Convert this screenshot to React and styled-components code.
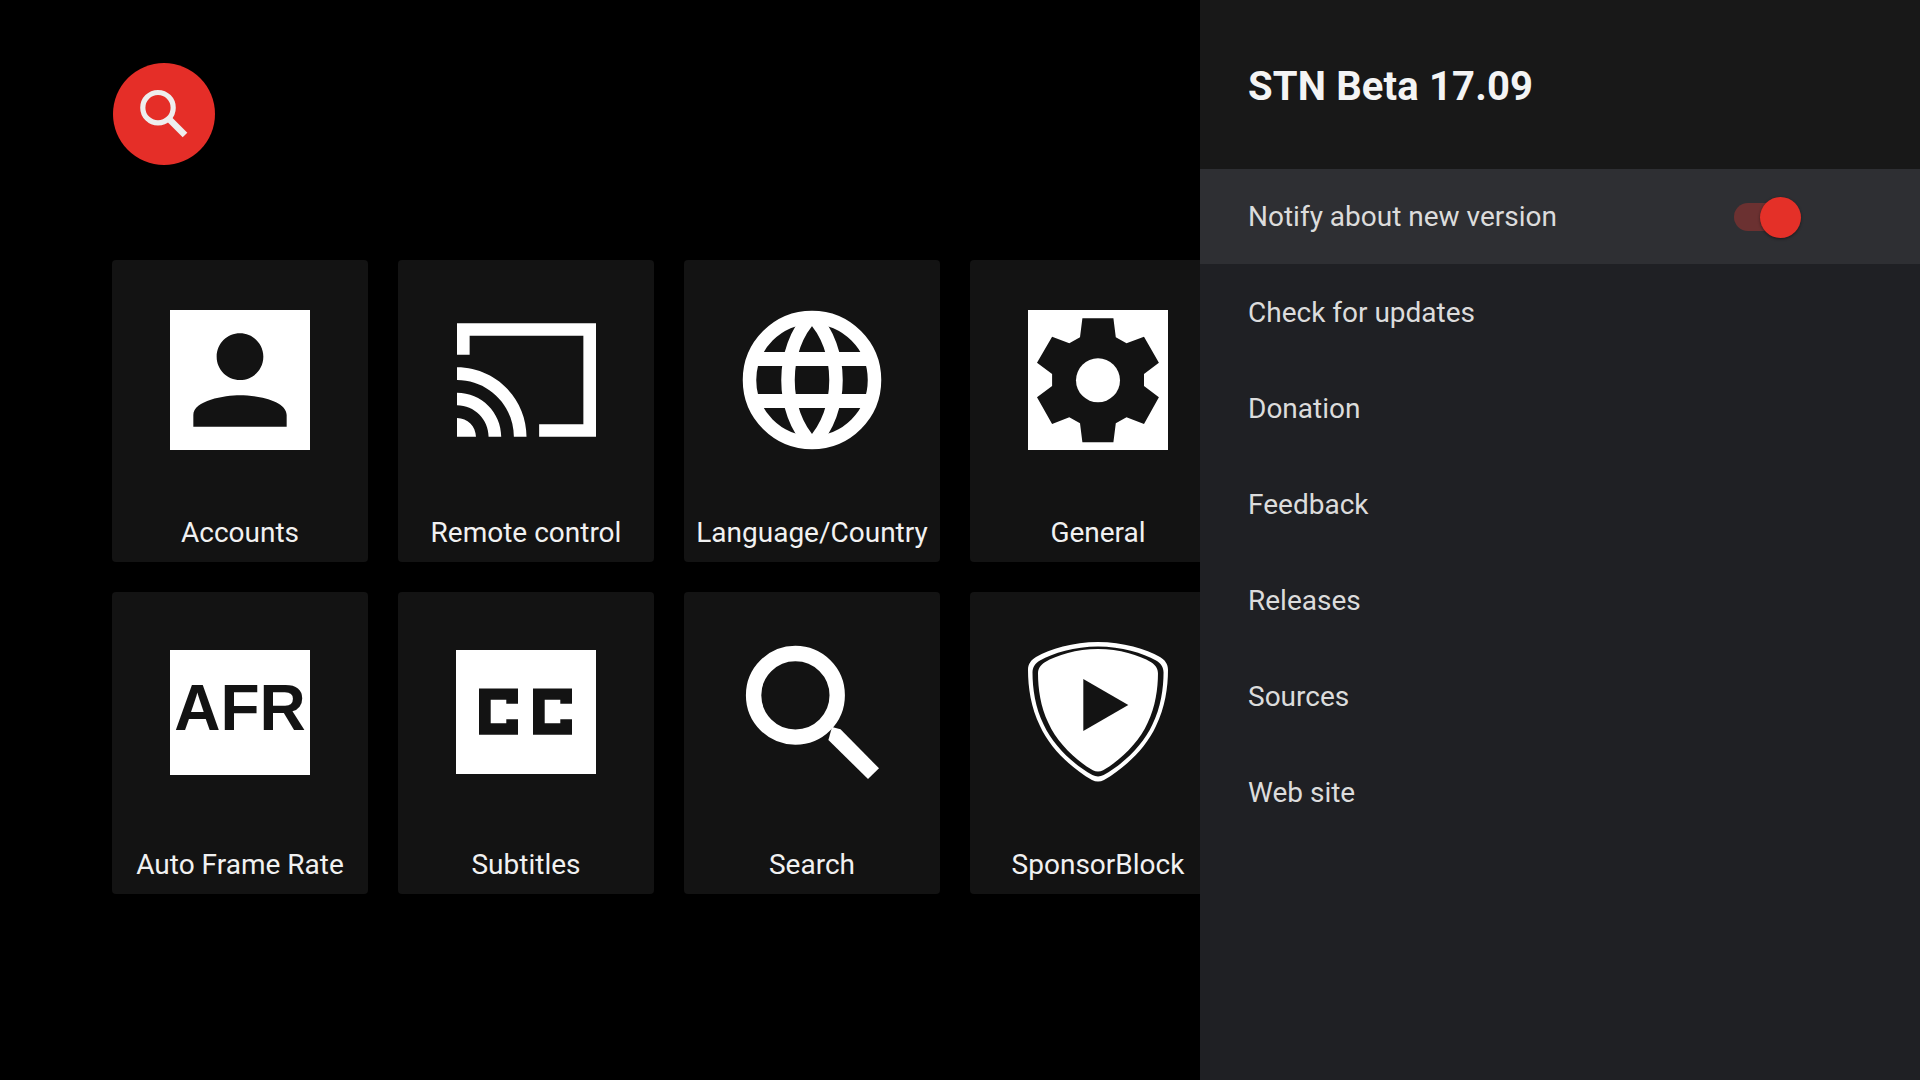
import styled, { createGlobalStyle } from 'styled-components';

const GlobalStyle = createGlobalStyle`
  html, body {
    margin: 0;
    padding: 0;
    background: #000;
  }
  body {
    font-family: Roboto, "Noto Sans", sans-serif;
    overflow: hidden;
  }
`;

const Screen = styled.div`
  display: flex;
  width: 1920px;
  height: 1080px;
  background: #000;
`;

const Browse = styled.main`
  width: 1200px;
  flex: none;
  overflow: hidden;
  padding: 63px 0 0 112px;
  box-sizing: border-box;
`;

const SearchOrb = styled.div`
  width: 102px;
  height: 102px;
  margin-left: 1px;
  border-radius: 50%;
  background: #e52e28;
  display: flex;
  align-items: center;
  justify-content: center;

  svg {
    display: block;
  }
`;

const Grid = styled.div`
  display: grid;
  grid-template-columns: repeat(4, 256px);
  grid-auto-rows: 302px;
  gap: 30px;
  margin-top: 95px;
`;

const Card = styled.div`
  background: #131313;
  border-radius: 4px;
  display: flex;
  flex-direction: column;
  align-items: center;
`;

const IconSlot = styled.div`
  height: 140px;
  margin-top: 50px;
  display: flex;
  align-items: center;
  justify-content: center;

  svg {
    display: block;
  }
`;

const CardLabel = styled.div`
  margin-top: 63px;
  font-size: 28px;
  line-height: 40px;
  color: #f1f1f1;
  white-space: nowrap;
`;

const AfrBadge = styled.div`
  width: 140px;
  height: 125px;
  background: #fff;
  color: #131313;
  font-family: "Liberation Sans", Arial, sans-serif;
  font-weight: 700;
  font-size: 64px;
  line-height: 116px;
  text-align: center;
`;

const Panel = styled.aside`
  width: 720px;
  flex: none;
  background: #1f2024;
`;

const PanelHeader = styled.header`
  height: 169px;
  background: #181818;
  padding: 64px 48px 0;
  box-sizing: border-box;
`;

const PanelTitle = styled.h1`
  margin: 0;
  font-size: 40px;
  line-height: 46px;
  font-weight: 700;
  letter-spacing: 0.15px;
  color: #f4f4f4;
`;

const Row = styled.div`
  height: ${(p) => (p.$focused ? '95px' : '96px')};
  padding: 0 48px;
  display: flex;
  align-items: center;
  font-size: 28px;
  color: #dcdcdc;
  background: ${(p) => (p.$focused ? '#2e2f33' : 'transparent')};
`;

const RowText = styled.span`
  flex: 1;
`;

const Switch = styled.div`
  position: relative;
  width: 56px;
  height: 28px;
  margin-right: 82px;
  border-radius: 14px;
  background: #6b3131;
`;

const SwitchThumb = styled.div`
  position: absolute;
  top: -6px;
  left: 26px;
  width: 41px;
  height: 41px;
  border-radius: 50%;
  background: #e43028;
  box-shadow: 0 1px 3px rgba(0, 0, 0, 0.45);
`;

const CARD = '#131313';

const SHIELD =
  'M70 0C95 0 118 7 132 15C137 18 140 22 140 28C140 45 137 66 128 84C118 106 97 126 76 138C72 140 68 140 64 138C43 126 22 106 12 84C3 66 0 45 0 28C0 22 3 18 8 15C22 7 45 0 70 0Z';

const AccountIcon = () => (
  <svg width="140" height="140" viewBox="0 0 24 24">
    <path
      fill="#fff"
      fillRule="evenodd"
      d="M0 0h24v24H0zM12 12c2.21 0 4-1.79 4-4s-1.79-4-4-4-4 1.79-4 4 1.79 4 4 4zm0 2.6c-2.67 0-8 .9-8 3.4v2h16v-2c0-2.5-5.33-3.4-8-3.4z"
    />
  </svg>
);

const CastIcon = () => (
  <svg width="139" height="114" viewBox="1 3 22 18">
    <path
      fill="#fff"
      d="M23 3H1v5h2V5h18v14h-7v2h9V3zM1 18v3h3c0-1.66-1.34-3-3-3zm0-4v2c2.76 0 5 2.24 5 5h2c0-3.87-3.13-7-7-7zm0-4v2c4.97 0 9 4.03 9 9h2c0-6.08-4.93-11-11-11z"
    />
  </svg>
);

const GlobeIcon = () => (
  <svg width="140" height="140" viewBox="0 0 140 140" fill="none" stroke="#fff" strokeWidth="13.5">
    <circle cx="70" cy="70" r="62.5" />
    <path d="M12 49H128M12 91H128" strokeWidth="14" />
    <path d="M70 6C38 38 38 102 70 134M70 6C102 38 102 102 70 134" />
  </svg>
);

const GearIcon = () => (
  <svg width="140" height="140" viewBox="0 0 140 140">
    <rect width="140" height="140" fill="#fff" />
    <polygon
      fill={CARD}
      points="54.4,8.3 85.4,8.3 87.8,27.3 98.5,33.3 116,26.7 130.9,52.7 116,64 116,76 130.9,87.3 116,114 98.5,107.3 87.8,113.3 85.4,132.3 54.4,132.3 52,113.3 41.3,107.3 24.1,114 9,87.3 24.1,76 24.1,64 9,52.7 24.1,26.7 41.3,33.3 52,27.3"
    />
    <circle cx="70" cy="70.3" r="22" fill="#fff" />
  </svg>
);

const CcIcon = () => (
  <svg width="140" height="124" viewBox="0 0 140 124">
    <path
      fill="#fff"
      fillRule="evenodd"
      d="M0 0H140V124H0ZM23 38.5H62V53.8H50.3V49.8H34.7V73.2H50.3V69.2H62V84.8H23ZM77 38.5H116V53.8H104.3V49.8H88.7V73.2H104.3V69.2H116V84.8H77Z"
    />
  </svg>
);

const MagnifierIcon = () => (
  <svg width="140" height="140" viewBox="0 0 140 140">
    <circle cx="53.4" cy="53.3" r="41.8" fill="none" stroke="#fff" strokeWidth="15.4" />
    <polygon fill="#fff" points="86.4,98 126,137 137,126.3 98.5,87.3 90,85" />
  </svg>
);

const ShieldIcon = () => (
  <svg width="140" height="140" viewBox="0 0 140 140">
    <path fill="#fff" d={SHIELD} />
    <path fill={CARD} d={SHIELD} transform="translate(4.5 4.5) scale(0.936 0.932)" />
    <path fill="#fff" d={SHIELD} transform="translate(10 7) scale(0.857 0.879)" />
    <polygon fill={CARD} points="55.3,37 100.3,63 55.3,89" />
  </svg>
);

const tiles = [
  { label: 'Accounts', icon: <AccountIcon /> },
  { label: 'Remote control', icon: <CastIcon /> },
  { label: 'Language/Country', icon: <GlobeIcon /> },
  { label: 'General', icon: <GearIcon /> },
  { label: 'Auto Frame Rate', icon: <AfrBadge>AFR</AfrBadge> },
  { label: 'Subtitles', icon: <CcIcon /> },
  { label: 'Search', icon: <MagnifierIcon /> },
  { label: 'SponsorBlock', icon: <ShieldIcon /> },
];

const rows = ['Check for updates', 'Donation', 'Feedback', 'Releases', 'Sources', 'Web site'];

export default function App() {
  return (
    <>
      <GlobalStyle />
      <Screen>
        <Browse>
          <SearchOrb>
            <svg width="102" height="102" viewBox="0 0 102 102" fill="none" stroke="#eee">
              <circle cx="45" cy="44.7" r="15.2" strokeWidth="5.2" />
              <path d="M56 56L72 72" strokeWidth="6.5" />
            </svg>
          </SearchOrb>
          <Grid>
            {tiles.map((t) => (
              <Card key={t.label}>
                <IconSlot>{t.icon}</IconSlot>
                <CardLabel>{t.label}</CardLabel>
              </Card>
            ))}
          </Grid>
        </Browse>
        <Panel>
          <PanelHeader>
            <PanelTitle>STN Beta 17.09</PanelTitle>
          </PanelHeader>
          <Row $focused>
            <RowText>Notify about new version</RowText>
            <Switch>
              <SwitchThumb />
            </Switch>
          </Row>
          {rows.map((r) => (
            <Row key={r}>
              <RowText>{r}</RowText>
            </Row>
          ))}
        </Panel>
      </Screen>
    </>
  );
}
